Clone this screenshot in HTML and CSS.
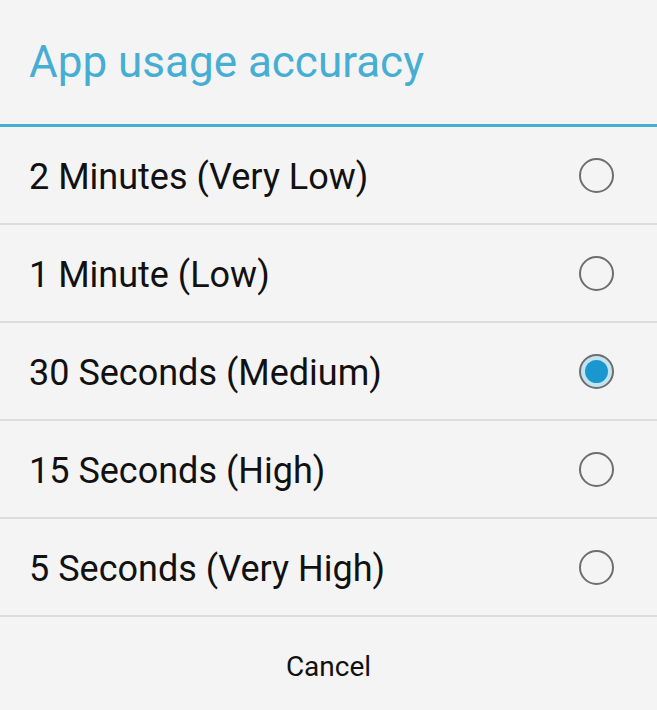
FILE: index.html
```html
<!DOCTYPE html>
<html>
<head>
<meta charset="utf-8">
<link rel="stylesheet" href="styles.css">
</head>
<body>
<div class="dialog">
  <div class="title">App usage accuracy</div>
  <div class="title-line"></div>
  <div class="list">
    <div class="row"><span class="label">2 Minutes (Very Low)</span><span class="radio"></span></div>
    <div class="row"><span class="label">1 Minute (Low)</span><span class="radio"></span></div>
    <div class="row"><span class="label">30 Seconds (Medium)</span><span class="radio checked"><span class="dot"></span></span></div>
    <div class="row"><span class="label">15 Seconds (High)</span><span class="radio"></span></div>
    <div class="row"><span class="label">5 Seconds (Very High)</span><span class="radio"></span></div>
  </div>
  <div class="footer"><span class="cancel">Cancel</span></div>
</div>
</body>
</html>
```
FILE: styles.css
```css
html, body {
  margin: 0;
  padding: 0;
  background: #f4f4f4;
}
.dialog {
  width: 657px;
  height: 710px;
  background: #f4f4f4;
  font-family: Roboto, "Noto Sans", sans-serif;
  overflow: hidden;
}
.title {
  height: 124px;
  box-sizing: border-box;
  padding-left: 29px;
  display: flex;
  align-items: center;
  font-size: 44px;
  color: #47aed3;
}
.title-line {
  height: 3px;
  background: #47aed3;
}
.row {
  height: 96px;
  border-bottom: 2px solid #dcdcdc;
  display: flex;
  align-items: center;
  justify-content: space-between;
  padding: 0 43px 0 29px;
}
.label {
  font-size: 36px;
  color: #111;
  padding-top: 4px;
}
.radio {
  width: 31px;
  height: 31px;
  border: 2px solid #6e6e6e;
  border-radius: 50%;
  display: flex;
  align-items: center;
  justify-content: center;
}
.radio.checked {
  background: #c4e3f1;
}
.dot {
  width: 23px;
  height: 23px;
  border-radius: 50%;
  background: #1a97cf;
}
.footer {
  height: 93px;
  display: flex;
  align-items: center;
  justify-content: center;
}
.cancel {
  font-size: 28px;
  color: #111;
  padding-top: 6px;
}
```
